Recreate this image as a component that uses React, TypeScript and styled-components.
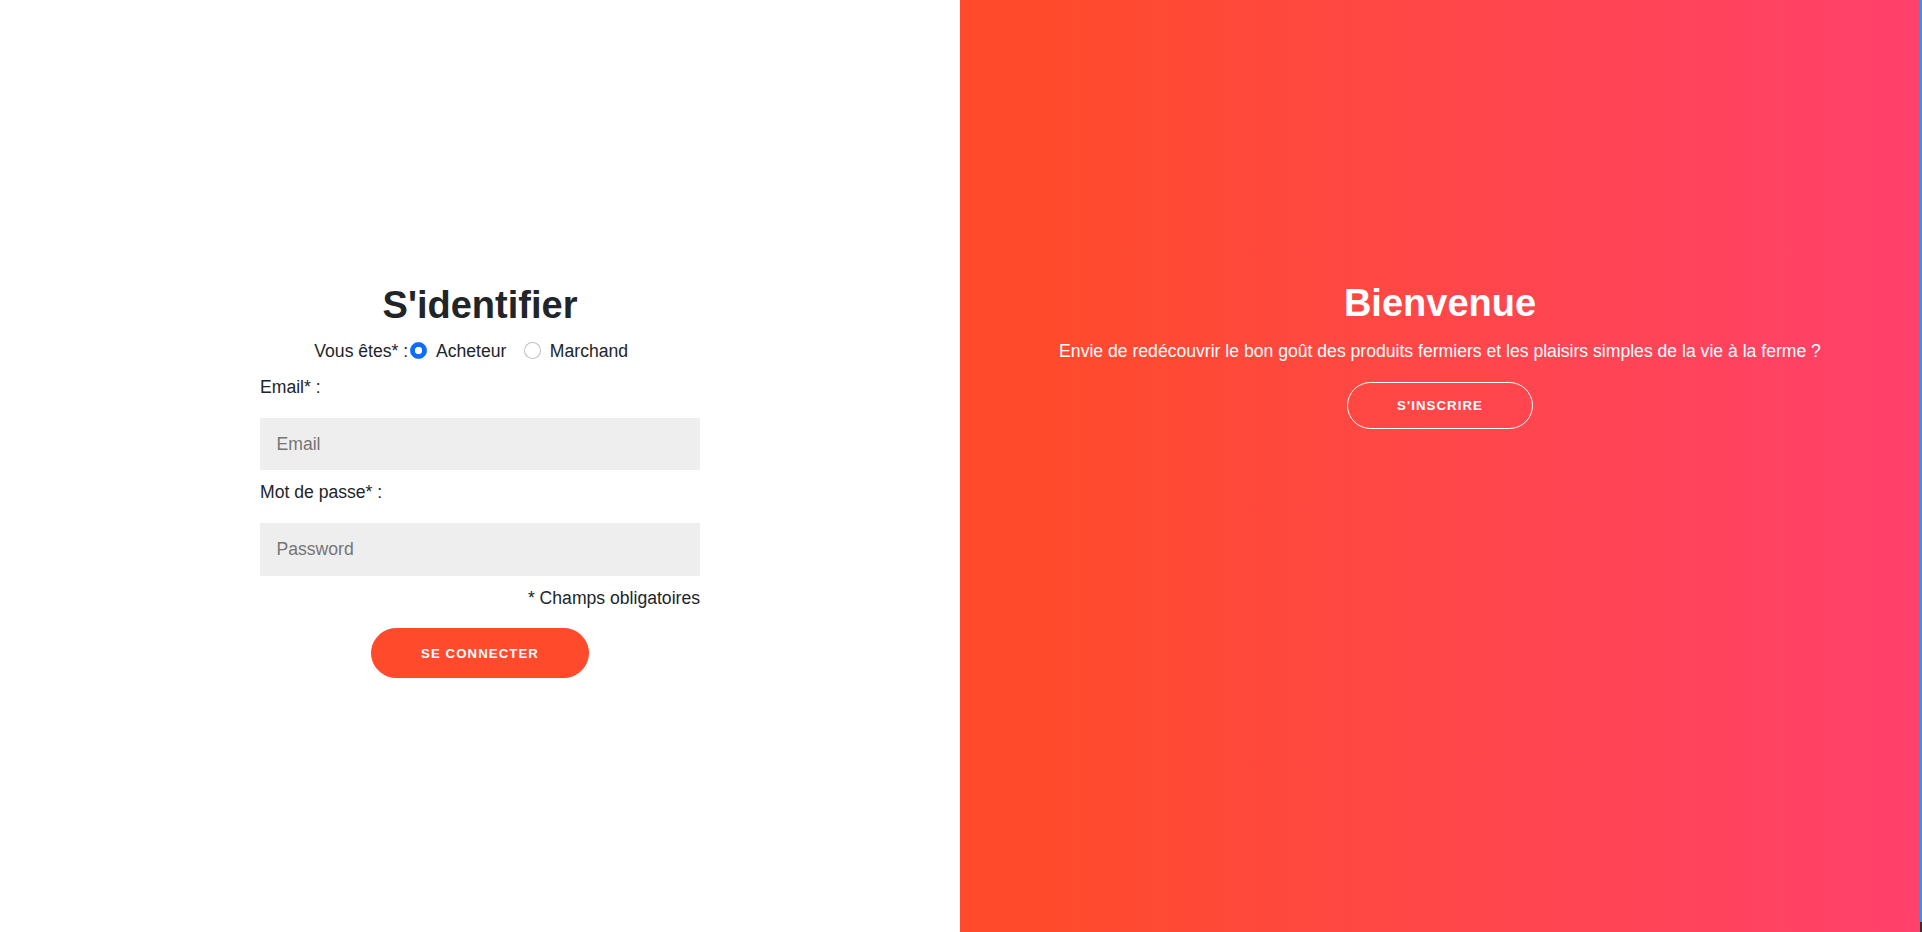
import React from 'react';
import styled, { createGlobalStyle } from 'styled-components';

const GlobalStyle = createGlobalStyle`
  html, body {
    margin: 0;
    padding: 0;
    height: 100%;
    background: #fff;
  }
  body {
    font-family: "Liberation Sans", Arial, sans-serif;
    font-size: 17.6px;
    line-height: 1.5;
    color: #212529;
  }
  * { box-sizing: border-box; }
`;

const Page = styled.div`
  display: flex;
  width: 100%;
  height: 100vh;
  overflow: hidden;
`;

const SignInPanel = styled.section`
  width: 960px;
  flex-shrink: 0;
  display: flex;
  flex-direction: column;
  align-items: center;
  padding-top: 283px;
  background: #fff;
`;

const WelcomePanel = styled.section`
  width: 960px;
  flex-shrink: 0;
  display: flex;
  flex-direction: column;
  align-items: center;
  padding-top: 281px;
  background: linear-gradient(to right, #ff4b2b 8%, #ff416c 100%);
  color: #fff;
`;

const EdgeStrip = styled.div`
  width: 2px;
  flex-shrink: 0;
  background: linear-gradient(to bottom, #1ba1f2 0, #1ba1f2 922px, #2d3436 922px);
`;

const Title = styled.h1`
  margin: 0 0 ${(p: { light?: boolean }) => (p.light ? '11px' : '9px')};
  font-size: 38px;
  line-height: 1.2;
  font-weight: 700;
  color: ${(p: { light?: boolean }) => (p.light ? '#fff' : '#212529')};
`;

const RoleRow = styled.div`
  display: flex;
  align-items: center;
  justify-content: center;
  height: 26.4px;
  margin-bottom: 9.6px;
`;

const RoleLabel = styled.span`
  margin-right: 2px;
`;

const RoleOption = styled.label`
  display: inline-flex;
  align-items: center;
  margin-right: 17.6px;
  cursor: pointer;
`;

const Radio = styled.input`
  appearance: none;
  width: 17px;
  height: 17px;
  margin: 0 8.8px 0 0;
  border-radius: 50%;
  border: 1px solid rgba(0, 0, 0, 0.25);
  background: #fff;
  &:checked {
    border-color: #0d6efd;
    background: radial-gradient(circle, #fff 0 3.4px, #0d6efd 4px);
  }
`;

const Form = styled.form`
  width: 440px;
  display: flex;
  flex-direction: column;
`;

const FieldLabel = styled.label`
  display: block;
  margin-bottom: 8.8px;
`;

const TextInput = styled.input`
  display: block;
  width: 100%;
  margin: 8.8px 0;
  padding: 13.2px 16.5px;
  border: none;
  outline: none;
  background: #eee;
  font-family: inherit;
  font-size: 17.6px;
  line-height: 1.5;
  color: #212529;
  &::placeholder {
    color: #757575;
  }
`;

const RequiredNote = styled.p`
  margin: 0;
  text-align: right;
`;

const PillButton = styled.button`
  align-self: center;
  margin-top: ${(p: { ghost?: boolean }) => (p.ghost ? '18px' : '17px')};
  padding: ${(p: { ghost?: boolean }) => (p.ghost ? '15px 49.5px' : '16.5px 49.5px')};
  border-radius: 25px;
  border: 1px solid ${(p: { ghost?: boolean }) => (p.ghost ? '#fff' : '#ff4b2b')};
  background: ${(p: { ghost?: boolean }) => (p.ghost ? 'transparent' : '#ff4b2b')};
  color: #fff;
  font-family: "Liberation Sans", Arial, sans-serif;
  font-size: 13.2px;
  line-height: 15px;
  font-weight: 700;
  letter-spacing: 1.1px;
  text-transform: uppercase;
  cursor: pointer;
`;

const Tagline = styled.p`
  margin: 0;
  font-size: 17.6px;
  line-height: 26.4px;
`;

const App = () => {
  return (
    <Page>
      <GlobalStyle />
      <SignInPanel>
        <Title>S'identifier</Title>
        <RoleRow>
          <RoleLabel>Vous êtes* :</RoleLabel>
          <RoleOption>
            <Radio type="radio" name="role" defaultChecked />
            Acheteur
          </RoleOption>
          <RoleOption>
            <Radio type="radio" name="role" />
            Marchand
          </RoleOption>
        </RoleRow>
        <Form onSubmit={(e) => e.preventDefault()}>
          <FieldLabel htmlFor="email">Email* :</FieldLabel>
          <TextInput id="email" type="email" placeholder="Email" />
          <FieldLabel htmlFor="password">Mot de passe* :</FieldLabel>
          <TextInput id="password" type="password" placeholder="Password" />
          <RequiredNote>* Champs obligatoires</RequiredNote>
          <PillButton type="submit">Se connecter</PillButton>
        </Form>
      </SignInPanel>
      <WelcomePanel>
        <Title light>Bienvenue</Title>
        <Tagline>
          Envie de redécouvrir le bon goût des produits fermiers et les plaisirs simples de la vie à la ferme ?
        </Tagline>
        <PillButton ghost type="button">S'inscrire</PillButton>
      </WelcomePanel>
      <EdgeStrip />
    </Page>
  );
};

export default App;
